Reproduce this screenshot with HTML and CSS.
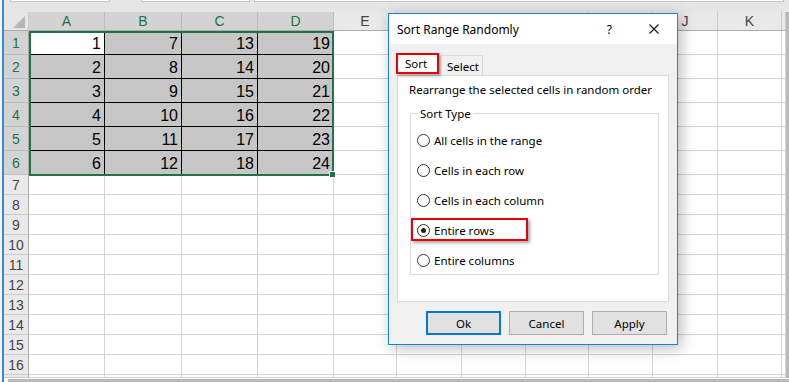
FILE: index.html
```html
<!DOCTYPE html>
<html lang="en">
<head>
    <meta charset="UTF-8">
    <title>Sort Range Randomly</title>
    <link rel="stylesheet" href="styles.css">
</head>
<body>
<div class="screen">
    <div class="main">
        <div class="topbar">
            <div class="fbox namebox"></div>
            <div class="fbox fxbox"></div>
            <div class="fbox formula"></div>
        </div>

        <div class="area">
            <div class="sheet">
                <div class="row head">
                    <div class="corner"><svg width="12" height="12" viewBox="0 0 12 12"><polygon points="12,0 12,12 0,12" fill="#b6b6b6"/></svg></div>
                    <div class="ch sel">A</div>
                    <div class="ch sel">B</div>
                    <div class="ch sel">C</div>
                    <div class="ch sel">D</div>
                    <div class="ch">E</div>
                    <div class="ch">F</div>
                    <div class="ch">G</div>
                    <div class="ch">H</div>
                    <div class="ch">I</div>
                    <div class="ch">J</div>
                    <div class="ch">K</div>
                    <div class="ch"></div>
                </div>

                <div class="row tall">
                    <div class="rh sel">1</div>
                    <div class="c v active">1</div><div class="c v">7</div><div class="c v">13</div><div class="c v">19</div>
                    <div class="c"></div><div class="c"></div><div class="c"></div><div class="c"></div><div class="c"></div><div class="c"></div><div class="c"></div><div class="c"></div>
                </div>
                <div class="row tall">
                    <div class="rh sel">2</div>
                    <div class="c v">2</div><div class="c v">8</div><div class="c v">14</div><div class="c v">20</div>
                    <div class="c"></div><div class="c"></div><div class="c"></div><div class="c"></div><div class="c"></div><div class="c"></div><div class="c"></div><div class="c"></div>
                </div>
                <div class="row tall">
                    <div class="rh sel">3</div>
                    <div class="c v">3</div><div class="c v">9</div><div class="c v">15</div><div class="c v">21</div>
                    <div class="c"></div><div class="c"></div><div class="c"></div><div class="c"></div><div class="c"></div><div class="c"></div><div class="c"></div><div class="c"></div>
                </div>
                <div class="row tall">
                    <div class="rh sel">4</div>
                    <div class="c v">4</div><div class="c v">10</div><div class="c v">16</div><div class="c v">22</div>
                    <div class="c"></div><div class="c"></div><div class="c"></div><div class="c"></div><div class="c"></div><div class="c"></div><div class="c"></div><div class="c"></div>
                </div>
                <div class="row tall">
                    <div class="rh sel">5</div>
                    <div class="c v">5</div><div class="c v">11</div><div class="c v">17</div><div class="c v">23</div>
                    <div class="c"></div><div class="c"></div><div class="c"></div><div class="c"></div><div class="c"></div><div class="c"></div><div class="c"></div><div class="c"></div>
                </div>
                <div class="row tall">
                    <div class="rh sel">6</div>
                    <div class="c v">6</div><div class="c v">12</div><div class="c v">18</div><div class="c v">24</div>
                    <div class="c"></div><div class="c"></div><div class="c"></div><div class="c"></div><div class="c"></div><div class="c"></div><div class="c"></div><div class="c"></div>
                </div>

                <div class="row">
                    <div class="rh">7</div>
                    <div class="c"></div><div class="c"></div><div class="c"></div><div class="c"></div><div class="c"></div><div class="c"></div><div class="c"></div><div class="c"></div><div class="c"></div><div class="c"></div><div class="c"></div><div class="c"></div>
                </div>
                <div class="row">
                    <div class="rh">8</div>
                    <div class="c"></div><div class="c"></div><div class="c"></div><div class="c"></div><div class="c"></div><div class="c"></div><div class="c"></div><div class="c"></div><div class="c"></div><div class="c"></div><div class="c"></div><div class="c"></div>
                </div>
                <div class="row">
                    <div class="rh">9</div>
                    <div class="c"></div><div class="c"></div><div class="c"></div><div class="c"></div><div class="c"></div><div class="c"></div><div class="c"></div><div class="c"></div><div class="c"></div><div class="c"></div><div class="c"></div><div class="c"></div>
                </div>
                <div class="row">
                    <div class="rh">10</div>
                    <div class="c"></div><div class="c"></div><div class="c"></div><div class="c"></div><div class="c"></div><div class="c"></div><div class="c"></div><div class="c"></div><div class="c"></div><div class="c"></div><div class="c"></div><div class="c"></div>
                </div>
                <div class="row">
                    <div class="rh">11</div>
                    <div class="c"></div><div class="c"></div><div class="c"></div><div class="c"></div><div class="c"></div><div class="c"></div><div class="c"></div><div class="c"></div><div class="c"></div><div class="c"></div><div class="c"></div><div class="c"></div>
                </div>
                <div class="row">
                    <div class="rh">12</div>
                    <div class="c"></div><div class="c"></div><div class="c"></div><div class="c"></div><div class="c"></div><div class="c"></div><div class="c"></div><div class="c"></div><div class="c"></div><div class="c"></div><div class="c"></div><div class="c"></div>
                </div>
                <div class="row">
                    <div class="rh">13</div>
                    <div class="c"></div><div class="c"></div><div class="c"></div><div class="c"></div><div class="c"></div><div class="c"></div><div class="c"></div><div class="c"></div><div class="c"></div><div class="c"></div><div class="c"></div><div class="c"></div>
                </div>
                <div class="row">
                    <div class="rh">14</div>
                    <div class="c"></div><div class="c"></div><div class="c"></div><div class="c"></div><div class="c"></div><div class="c"></div><div class="c"></div><div class="c"></div><div class="c"></div><div class="c"></div><div class="c"></div><div class="c"></div>
                </div>
                <div class="row">
                    <div class="rh">15</div>
                    <div class="c"></div><div class="c"></div><div class="c"></div><div class="c"></div><div class="c"></div><div class="c"></div><div class="c"></div><div class="c"></div><div class="c"></div><div class="c"></div><div class="c"></div><div class="c"></div>
                </div>
                <div class="row">
                    <div class="rh">16</div>
                    <div class="c"></div><div class="c"></div><div class="c"></div><div class="c"></div><div class="c"></div><div class="c"></div><div class="c"></div><div class="c"></div><div class="c"></div><div class="c"></div><div class="c"></div><div class="c"></div>
                </div>
                <div class="row cut">
                    <div class="rh"></div>
                    <div class="c"></div><div class="c"></div><div class="c"></div><div class="c"></div><div class="c"></div><div class="c"></div><div class="c"></div><div class="c"></div><div class="c"></div><div class="c"></div><div class="c"></div><div class="c"></div>
                </div>

                <div class="selection"><span class="handle"></span></div>
            </div>
            <div class="vscroll"></div>
        </div>

        <div class="bottom"><div class="hscroll"></div></div>
    </div>

    <div class="dialog">
        <div class="titlebar">
            <span class="title">Sort Range Randomly</span>
            <span class="help">?</span>
            <svg class="close" width="10" height="10" viewBox="0 0 10 10"><path d="M0.5 0.5 L9.5 9.5 M9.5 0.5 L0.5 9.5" stroke="#111" stroke-width="1.1"/></svg>
        </div>
        <div class="dbody">
            <div class="tabs">
                <div class="tab current">Sort<span class="mark tabmark"></span></div>
                <div class="tab">Select</div>
            </div>
            <div class="panel">
                <p class="hint">Rearrange the selected cells in random order</p>
                <fieldset class="group">
                    <legend>Sort Type</legend>
                    <div class="option"><span class="radio"></span>All cells in the range</div>
                    <div class="option"><span class="radio"></span>Cells in each row</div>
                    <div class="option"><span class="radio"></span>Cells in each column</div>
                    <div class="option"><span class="radio on"></span>Entire rows<span class="mark optmark"></span></div>
                    <div class="option"><span class="radio"></span>Entire columns</div>
                </fieldset>
            </div>
            <div class="buttons">
                <button class="btn default">Ok</button>
                <button class="btn">Cancel</button>
                <button class="btn">Apply</button>
            </div>
        </div>
    </div>
</div>
</body>
</html>
```

FILE: styles.css
```css
body {
    margin: 0;
    background: #f4f4f4;
    font-family: "Liberation Sans Narrow", "Liberation Sans", sans-serif;
    color: #000;
}

.screen {
    position: relative;
    width: 789px;
    height: 382px;
    overflow: hidden;
    padding-left: 2px;
    box-sizing: border-box;
}

.main {
    height: 382px;
    border-left: 2px solid #3a87d4;
    display: flex;
    flex-direction: column;
}

/* formula bar remains at the top */
.topbar {
    height: 12px;
    background: #e6e6e6;
    display: flex;
    flex: none;
}

.fbox {
    height: 1px;
    background: #fff;
    border: 1px solid #c6c6c6;
    border-top: none;
}

.namebox {
    margin-left: 6px;
    width: 98px;
}

.fxbox {
    margin-left: 31px;
    width: 107px;
}

.formula {
    margin-left: 4px;
    width: 528px;
}

.area {
    height: 366px;
    display: flex;
    flex: none;
    background: #fff;
}

.sheet {
    position: relative;
    width: 782px;
}

.row {
    display: grid;
    grid-template-columns: 25px 76px 77px 76px 76px 63px 65px 64px 63px 64px 65px 64px 4px;
    height: 20px;
}

.row.head {
    height: 19px;
}

.row.tall {
    height: 24px;
}

.row.cut {
    height: 3px;
    overflow: hidden;
}

.row > div {
    box-sizing: border-box;
}

.corner {
    background: #e6e6e6;
    border-right: 1px solid #c9c9c9;
    border-bottom: 1px solid #ababab;
    display: flex;
    align-items: flex-end;
    justify-content: flex-end;
    padding: 0 3px 2px 0;
}

.corner svg {
    display: block;
}

.ch {
    background: #e9e9e9;
    border-right: 1px solid #cbcbcb;
    border-bottom: 1px solid #ababab;
    color: #444;
    font-size: 14px;
    line-height: 18px;
    text-align: center;
}

.ch.sel {
    background: #d3d3d3;
    color: #217346;
    border-right-color: #bdbdbd;
}

.rh {
    background: #e9e9e9;
    border-right: 1px solid #ababab;
    border-bottom: 1px solid #cbcbcb;
    color: #444;
    font-size: 14px;
    text-align: center;
    display: flex;
    align-items: center;
    justify-content: center;
}

.rh.sel {
    background: #d3d3d3;
    color: #217346;
    border-bottom-color: #bdbdbd;
}

.c {
    border-right: 1px solid #d4d4d4;
    border-bottom: 1px solid #d4d4d4;
}

.c.v {
    background: #c6c6c6;
    border-color: #000;
    font-size: 16px;
    display: flex;
    align-items: flex-end;
    justify-content: flex-end;
    padding: 0 3px 1px 0;
    line-height: 18px;
}

.c.v.active {
    background: #fff;
}

.selection {
    position: absolute;
    left: 25px;
    top: 19px;
    width: 305px;
    height: 145px;
    border: 2px solid #217346;
    box-sizing: border-box;
}

.handle {
    position: absolute;
    right: -4px;
    bottom: -4px;
    width: 7px;
    height: 7px;
    background: #217346;
    border: 1px solid #fff;
    box-sizing: border-box;
}

.vscroll {
    width: 3px;
    background: #b9b9b9;
}

.bottom {
    flex: 1;
    padding: 1px 0 0 4px;
    background: #fff;
}

.hscroll {
    height: 3px;
    background: #b9b9b9;
}

/* dialog */
.dialog {
    position: absolute;
    left: 388px;
    top: 13px;
    width: 290px;
    height: 332px;
    box-sizing: border-box;
    border: 1px solid #1883d7;
    background: #f0f0f0;
    box-shadow: 3px 3px 14px rgba(0, 0, 0, 0.28);
    font-family: "Noto Sans", sans-serif;
    font-size: 11.5px;
    color: #000;
    display: flex;
    flex-direction: column;
}

.titlebar {
    height: 30px;
    background: #fff;
    display: flex;
    align-items: center;
    padding-left: 8px;
    flex: none;
}

.title {
    font-size: 12px;
}

.help {
    margin-left: auto;
    font-size: 12px;
}

.close {
    margin: 0 18px 0 37px;
}

.dbody {
    padding: 9px 8px 0 8px;
}

.tabs {
    display: flex;
    align-items: flex-end;
    height: 22px;
}

.tab {
    position: relative;
    height: 20px;
    box-sizing: border-box;
    padding: 0 5px;
    line-height: 19px;
    border: 1px solid #d9d9d9;
    border-bottom: none;
    background: #f0f0f0;
}

.tab.current {
    height: 22px;
    width: 42px;
    padding-left: 7px;
    background: #fff;
    margin-right: 2px;
}

.tab + .tab {
    width: 42px;
    padding-left: 5px;
    line-height: 22px;
}

.mark {
    position: absolute;
    border: 2px solid #e8000b;
    box-shadow: 2px 2px 3px rgba(0, 0, 0, 0.35);
    box-sizing: border-box;
}

.tabmark {
    left: -2px;
    top: -1px;
    width: 43px;
    height: 21px;
}

.panel {
    height: 227px;
    box-sizing: border-box;
    border: 1px solid #d9d9d9;
    background: #fff;
    padding: 0 9px 0 11px;
}

.hint {
    margin: 6px 0 0 0;
    line-height: 16px;
}

.group {
    margin: 8px 0 0 1px;
    height: 169px;
    box-sizing: border-box;
    border: 1px solid #dcdcdc;
    padding: 4px 0 0 6px;
}

.group legend {
    padding: 0 2px;
    margin-left: 1px;
}

.option {
    position: relative;
    height: 30px;
    display: flex;
    align-items: center;
}

.radio {
    width: 13px;
    height: 13px;
    box-sizing: border-box;
    border: 1px solid #333;
    border-radius: 50%;
    background: #fff;
    margin-right: 4px;
    display: flex;
    align-items: center;
    justify-content: center;
}

.radio.on::after {
    content: "";
    width: 5px;
    height: 5px;
    border-radius: 50%;
    background: #222;
}

.optmark {
    left: -6px;
    top: 3px;
    width: 117px;
    height: 23px;
}

.buttons {
    display: flex;
    justify-content: flex-end;
    gap: 8px;
    margin: 9px 2px 0 0;
}

.btn {
    width: 75px;
    height: 24px;
    background: #e1e1e1;
    border: 1px solid #adadad;
    font-family: "Noto Sans", sans-serif;
    font-size: 11.5px;
    color: #000;
    padding: 0;
}

.btn.default {
    border: 2px solid #0078d7;
}
```
